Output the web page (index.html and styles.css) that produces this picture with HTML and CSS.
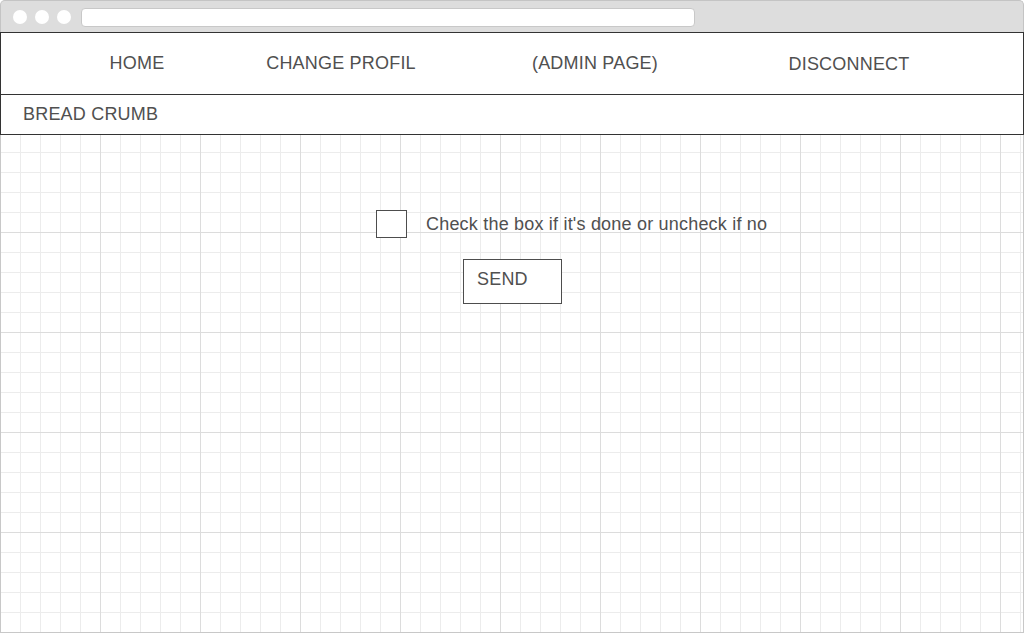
FILE: index.html
```html
<!DOCTYPE html>
<html>
<head>
<meta charset="utf-8">
<link rel="stylesheet" href="styles.css">
</head>
<body>
<div class="window">
  <div class="titlebar">
    <span class="dot"></span>
    <span class="dot"></span>
    <span class="dot"></span>
    <span class="address"></span>
  </div>
  <nav class="nav">
    <a class="nav-item nav-first">HOME</a>
    <a class="nav-item">CHANGE PROFIL</a>
    <a class="nav-item">(ADMIN PAGE)</a>
    <a class="nav-item nav-last">DISCONNECT</a>
  </nav>
  <div class="crumb">BREAD CRUMB</div>
  <main class="canvas">
    <div class="check-row">
      <span class="checkbox"></span>
      <span class="check-label">Check the box if it's done or uncheck if no</span>
    </div>
    <div class="send">SEND</div>
  </main>
</div>
</body>
</html>
```

FILE: styles.css
```css
html, body {
  margin: 0;
  padding: 0;
  background: #ffffff;
}

.window {
  width: 1024px;
  height: 633px;
  display: flex;
  flex-direction: column;
  font-family: "Liberation Sans", Arial, sans-serif;
  font-size: 18px;
  letter-spacing: 0.2px;
  color: #505050;
}

.titlebar {
  box-sizing: border-box;
  height: 32px;
  background: #dddddd;
  border: 1px solid #c4c4c4;
  border-bottom: none;
  border-radius: 5px 5px 0 0;
  display: flex;
  align-items: center;
  padding-left: 12px;
  padding-top: 1px;
}

.dot {
  width: 14px;
  height: 14px;
  border-radius: 50%;
  background: #ffffff;
  margin-right: 8px;
}

.address {
  margin-left: 2px;
  width: 614px;
  height: 19px;
  box-sizing: border-box;
  background: #ffffff;
  border: 1px solid #c8c8c8;
  border-radius: 4px;
}

.nav {
  box-sizing: border-box;
  height: 63px;
  border: 1px solid #333333;
  display: grid;
  grid-template-columns: 154px 254px 254px 254px;
  padding-left: 59px;
  align-items: center;
}

.nav-item {
  text-align: center;
  padding-bottom: 1px;
}

.nav-last {
  padding-top: 2px;
  padding-bottom: 0;
}

.crumb {
  box-sizing: border-box;
  height: 40px;
  border: 1px solid #333333;
  border-top: none;
  display: flex;
  align-items: center;
  padding-left: 22px;
}

.canvas {
  flex: 1;
  box-sizing: border-box;
  border: 1px solid #c8c8c8;
  border-top: none;
  background-color: #ffffff;
  background-image:
    linear-gradient(to right, #dcdcdc 1px, transparent 1px),
    linear-gradient(to bottom, #dcdcdc 1px, transparent 1px),
    linear-gradient(to right, #ececec 1px, transparent 1px),
    linear-gradient(to bottom, #ececec 1px, transparent 1px);
  background-size: 100px 100px, 100px 100px, 20px 20px, 20px 20px;
  background-position: 0 -3px, 0 -3px, 0 -3px, 0 -3px;
  background-origin: border-box;
  padding-left: 375px;
  padding-top: 75px;
  display: flex;
  flex-direction: column;
  align-items: flex-start;
}

.check-row {
  display: flex;
  align-items: center;
  gap: 19px;
}

.checkbox {
  width: 31px;
  height: 28px;
  box-sizing: border-box;
  border: 1px solid #4d4d4d;
  background: #ffffff;
}

.check-label {
  padding-top: 1px;
}

.send {
  margin-top: 21px;
  margin-left: 87px;
  width: 99px;
  height: 45px;
  box-sizing: border-box;
  border: 1px solid #4d4d4d;
  background: #ffffff;
  display: flex;
  align-items: center;
  padding-left: 13px;
  padding-bottom: 4px;
}
```
